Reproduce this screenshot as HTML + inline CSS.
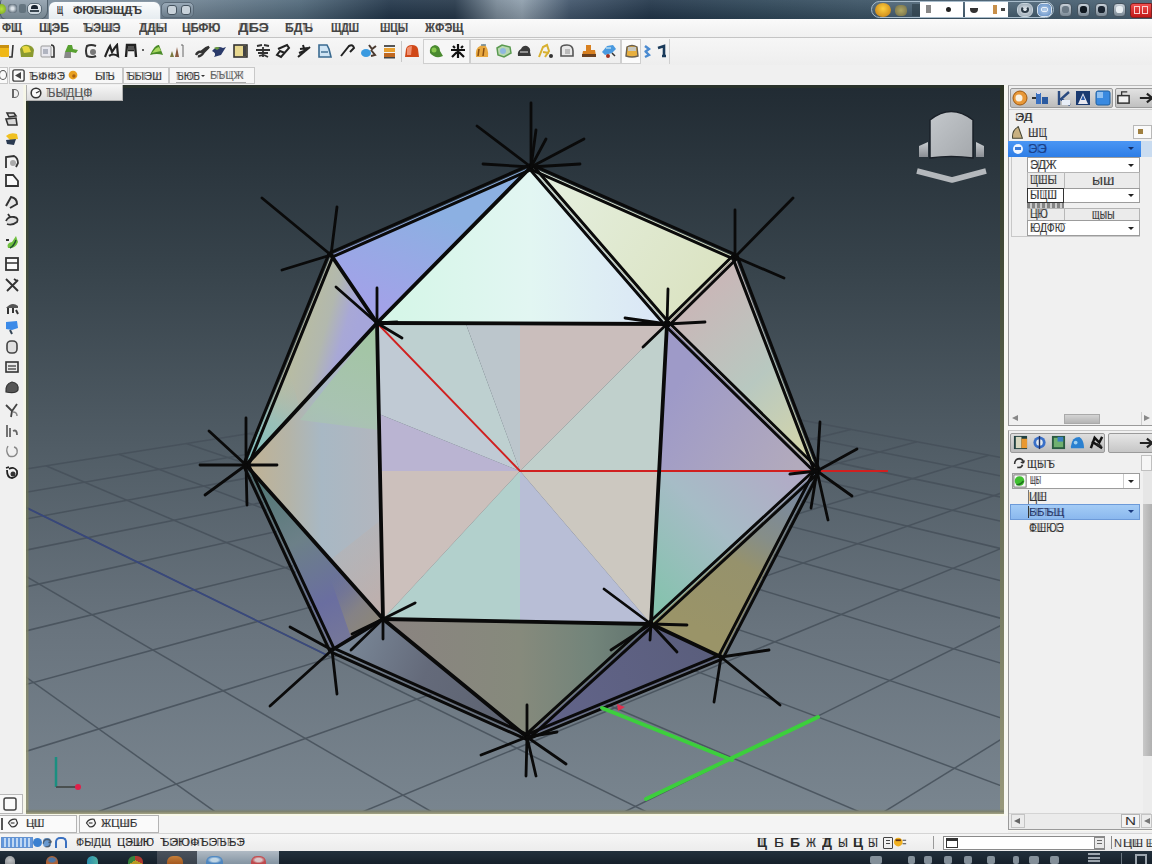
<!DOCTYPE html><html><head><meta charset="utf-8"><style>
html,body{margin:0;padding:0;width:1152px;height:864px;overflow:hidden;background:#f0f0f0;font-family:"Liberation Sans",sans-serif;}
.b{position:absolute;box-sizing:border-box;}
.t{position:absolute;white-space:nowrap;line-height:1;}
</style></head><body>
<svg class="b" style="left:0;top:0" width="1152" height="864" viewBox="0 0 1152 864"><defs>
<linearGradient id="bg" x1="0" y1="85" x2="0" y2="813" gradientUnits="userSpaceOnUse">
<stop offset="0" stop-color="#212b33"/><stop offset="0.25" stop-color="#37434b"/>
<stop offset="0.5" stop-color="#515d66"/><stop offset="0.75" stop-color="#69747e"/><stop offset="1" stop-color="#79858f"/>
</linearGradient>
<clipPath id="vc"><rect x="26" y="85" width="975" height="728"/></clipPath>
</defs><rect x="26" y="85" width="975" height="728" fill="url(#bg)"/><g clip-path="url(#vc)"><g opacity="0.85"><line x1="-1026.4" y1="636.4" x2="-4063.7" y2="6031.6" stroke="#46505a" stroke-width="1.5"/><line x1="-850.4" y1="608.4" x2="-2090.9" y2="6058.1" stroke="#46505a" stroke-width="1.5"/><line x1="-694.3" y1="583.6" x2="-118.2" y2="6084.7" stroke="#46505a" stroke-width="1.5"/><line x1="-554.8" y1="561.4" x2="1854.6" y2="6111.2" stroke="#46505a" stroke-width="1.5"/><line x1="-429.4" y1="541.4" x2="3827.3" y2="6137.8" stroke="#46505a" stroke-width="1.5"/><line x1="-316.0" y1="523.4" x2="5800.1" y2="6164.3" stroke="#46505a" stroke-width="1.5"/><line x1="-213.1" y1="507.0" x2="7772.8" y2="6190.9" stroke="#46505a" stroke-width="1.5"/><line x1="-119.2" y1="492.1" x2="9745.6" y2="6217.5" stroke="#46505a" stroke-width="1.5"/><line x1="-33.2" y1="478.4" x2="11718.3" y2="6244.0" stroke="#46505a" stroke-width="1.5"/><line x1="45.9" y1="465.8" x2="13691.1" y2="6270.6" stroke="#46505a" stroke-width="1.5"/><line x1="118.8" y1="454.2" x2="15663.8" y2="6297.1" stroke="#46505a" stroke-width="1.5"/><line x1="186.3" y1="443.5" x2="17636.6" y2="6323.7" stroke="#46505a" stroke-width="1.5"/><line x1="249.0" y1="433.5" x2="19609.3" y2="6350.3" stroke="#46505a" stroke-width="1.5"/><line x1="307.3" y1="424.3" x2="21582.1" y2="6376.8" stroke="#46505a" stroke-width="1.5"/><line x1="361.6" y1="415.6" x2="23554.8" y2="6403.4" stroke="#46505a" stroke-width="1.5"/><line x1="412.5" y1="407.5" x2="25527.6" y2="6429.9" stroke="#46505a" stroke-width="1.5"/><line x1="460.1" y1="400.0" x2="27500.3" y2="6456.5" stroke="#46505a" stroke-width="1.5"/><line x1="504.8" y1="392.8" x2="29473.1" y2="6483.0" stroke="#46505a" stroke-width="1.5"/><line x1="546.9" y1="386.1" x2="31445.8" y2="6509.6" stroke="#46505a" stroke-width="1.5"/><line x1="586.6" y1="379.8" x2="33418.6" y2="6536.2" stroke="#46505a" stroke-width="1.5"/><line x1="-32534.1" y1="5648.3" x2="586.6" y2="379.8" stroke="#46505a" stroke-width="1.5"/><line x1="-30256.1" y1="5679.0" x2="632.2" y2="388.4" stroke="#46505a" stroke-width="1.5"/><line x1="-27978.2" y1="5709.6" x2="681.0" y2="397.6" stroke="#46505a" stroke-width="1.5"/><line x1="-25700.2" y1="5740.3" x2="733.5" y2="407.4" stroke="#46505a" stroke-width="1.5"/><line x1="-23422.3" y1="5771.0" x2="789.9" y2="418.0" stroke="#46505a" stroke-width="1.5"/><line x1="-21144.4" y1="5801.6" x2="850.9" y2="429.4" stroke="#46505a" stroke-width="1.5"/><line x1="-18866.4" y1="5832.3" x2="916.9" y2="441.8" stroke="#46505a" stroke-width="1.5"/><line x1="-16588.5" y1="5862.9" x2="988.7" y2="455.2" stroke="#46505a" stroke-width="1.5"/><line x1="-14310.5" y1="5893.6" x2="1066.9" y2="469.9" stroke="#46505a" stroke-width="1.5"/><line x1="-12032.6" y1="5924.3" x2="1152.5" y2="486.0" stroke="#46505a" stroke-width="1.5"/><line x1="-9754.7" y1="5954.9" x2="1246.6" y2="503.6" stroke="#46505a" stroke-width="1.5"/><line x1="-7476.7" y1="5985.6" x2="1350.6" y2="523.1" stroke="#46505a" stroke-width="1.5"/><line x1="-5198.8" y1="6016.3" x2="1466.0" y2="544.7" stroke="#46505a" stroke-width="1.5"/><line x1="-2920.8" y1="6046.9" x2="1594.9" y2="568.9" stroke="#46505a" stroke-width="1.5"/><line x1="-642.9" y1="6077.6" x2="1739.9" y2="596.1" stroke="#46505a" stroke-width="1.5"/><line x1="1635.0" y1="6108.3" x2="1903.9" y2="626.9" stroke="#46505a" stroke-width="1.5"/><line x1="3913.0" y1="6138.9" x2="2091.3" y2="662.0" stroke="#46505a" stroke-width="1.5"/><line x1="6190.9" y1="6169.6" x2="2307.1" y2="702.5" stroke="#46505a" stroke-width="1.5"/><line x1="8468.9" y1="6200.3" x2="2558.6" y2="749.6" stroke="#46505a" stroke-width="1.5"/><line x1="10746.8" y1="6230.9" x2="2855.3" y2="805.2" stroke="#46505a" stroke-width="1.5"/><line x1="13024.7" y1="6261.6" x2="3210.6" y2="871.9" stroke="#46505a" stroke-width="1.5"/><line x1="15302.7" y1="6292.3" x2="3643.7" y2="953.1" stroke="#46505a" stroke-width="1.5"/><line x1="17580.6" y1="6322.9" x2="4183.6" y2="1054.3" stroke="#46505a" stroke-width="1.5"/><line x1="19858.5" y1="6353.6" x2="4874.9" y2="1183.9" stroke="#46505a" stroke-width="1.5"/><line x1="22136.5" y1="6384.3" x2="5792.0" y2="1355.9" stroke="#46505a" stroke-width="1.5"/><line x1="24414.4" y1="6414.9" x2="7067.1" y2="1595.0" stroke="#46505a" stroke-width="1.5"/><line x1="26692.4" y1="6445.6" x2="8960.6" y2="1950.1" stroke="#46505a" stroke-width="1.5"/><line x1="28970.3" y1="6476.3" x2="12066.3" y2="2532.4" stroke="#46505a" stroke-width="1.5"/><line x1="31248.2" y1="6506.9" x2="18096.1" y2="3663.1" stroke="#46505a" stroke-width="1.5"/><line x1="-33.2" y1="478.4" x2="327.7" y2="655.5" stroke="#32427e" stroke-width="1.7"/></g><defs><linearGradient id="f1" gradientUnits="userSpaceOnUse" x1="431" y1="211" x2="390" y2="310"><stop offset="0" stop-color="#8cb0e2"/><stop offset="1" stop-color="#a2a2e8"/></linearGradient><linearGradient id="f2" gradientUnits="userSpaceOnUse" x1="400" y1="300" x2="660" y2="300"><stop offset="0" stop-color="#d6f6e8"/><stop offset="0.5" stop-color="#e2f6f2"/><stop offset="1" stop-color="#dae6f6"/></linearGradient><linearGradient id="f3" gradientUnits="userSpaceOnUse" x1="560" y1="190" x2="720" y2="300"><stop offset="0" stop-color="#e4eedc"/><stop offset="1" stop-color="#dae2c0"/></linearGradient><linearGradient id="f4" gradientUnits="userSpaceOnUse" x1="298" y1="335" x2="350" y2="350"><stop offset="0" stop-color="#b8bca2"/><stop offset="0.45" stop-color="#b2b8ae"/><stop offset="0.8" stop-color="#a8a8d6"/><stop offset="1" stop-color="#a6a6da"/></linearGradient><linearGradient id="f4b" gradientUnits="userSpaceOnUse" x1="250" y1="460" x2="300" y2="380"><stop offset="0" stop-color="#7cc0c0" stop-opacity="1"/><stop offset="0.5" stop-color="#94c0bc" stop-opacity="0.8"/><stop offset="1" stop-color="#b0bcb0" stop-opacity="0"/></linearGradient><linearGradient id="f5" gradientUnits="userSpaceOnUse" x1="680" y1="320" x2="810" y2="460"><stop offset="0" stop-color="#c8b8b8"/><stop offset="0.5" stop-color="#b8c8c0"/><stop offset="1" stop-color="#d6d6a8"/></linearGradient><linearGradient id="f6" gradientUnits="userSpaceOnUse" x1="250" y1="470" x2="380" y2="470"><stop offset="0" stop-color="#c0b294"/><stop offset="0.3" stop-color="#b4b4a8"/><stop offset="0.55" stop-color="#a8b8c4"/><stop offset="1" stop-color="#b2b6be"/></linearGradient><linearGradient id="f6b" gradientUnits="userSpaceOnUse" x1="377" y1="330" x2="330" y2="470"><stop offset="0" stop-color="#a2c6a2" stop-opacity="1"/><stop offset="0.6" stop-color="#a8c4b0" stop-opacity="0.9"/><stop offset="1" stop-color="#a8c0b8" stop-opacity="0.3"/></linearGradient><linearGradient id="f6c" gradientUnits="userSpaceOnUse" x1="300" y1="500" x2="383" y2="619"><stop offset="0" stop-color="#b4b4b4" stop-opacity="0"/><stop offset="1" stop-color="#c0aeaa" stop-opacity="1"/></linearGradient><linearGradient id="f7" gradientUnits="userSpaceOnUse" x1="680" y1="380" x2="800" y2="460"><stop offset="0" stop-color="#9e9ac8"/><stop offset="1" stop-color="#b2aabc"/></linearGradient><linearGradient id="f7b" gradientUnits="userSpaceOnUse" x1="665" y1="610" x2="800" y2="475"><stop offset="0" stop-color="#86c2ae"/><stop offset="0.5" stop-color="#a6bcc6"/><stop offset="1" stop-color="#b2aac6"/></linearGradient><linearGradient id="f8" gradientUnits="userSpaceOnUse" x1="250" y1="470" x2="335" y2="640"><stop offset="0" stop-color="#4e7672"/><stop offset="0.45" stop-color="#6c8088"/><stop offset="0.8" stop-color="#6a6ea0"/><stop offset="1" stop-color="#74769a"/></linearGradient><linearGradient id="f8b" gradientUnits="userSpaceOnUse" x1="383" y1="619" x2="335" y2="575"><stop offset="0" stop-color="#8c8678" stop-opacity="1"/><stop offset="0.4" stop-color="#8a8680" stop-opacity="0.8"/><stop offset="1" stop-color="#7a8088" stop-opacity="0"/></linearGradient><linearGradient id="f9" gradientUnits="userSpaceOnUse" x1="800" y1="490" x2="720" y2="640"><stop offset="0" stop-color="#7888a0"/><stop offset="0.35" stop-color="#868e88"/><stop offset="0.55" stop-color="#96926c"/><stop offset="1" stop-color="#9a9468"/></linearGradient><linearGradient id="f10" gradientUnits="userSpaceOnUse" x1="400" y1="660" x2="640" y2="660"><stop offset="0" stop-color="#8a8480"/><stop offset="0.5" stop-color="#868a7c"/><stop offset="0.8" stop-color="#72847a"/><stop offset="1" stop-color="#647670"/></linearGradient><linearGradient id="f11" gradientUnits="userSpaceOnUse" x1="340" y1="650" x2="500" y2="720"><stop offset="0" stop-color="#7a8898"/><stop offset="0.5" stop-color="#646a7a"/><stop offset="1" stop-color="#5e6472"/></linearGradient><linearGradient id="f12" gradientUnits="userSpaceOnUse" x1="720" y1="660" x2="540" y2="730"><stop offset="0" stop-color="#5a5e7c"/><stop offset="1" stop-color="#62648a"/></linearGradient></defs><polygon points="531,167 331,255 377,323" fill="url(#f1)" /><polygon points="531,167 377,323 667,324" fill="url(#f2)" /><polygon points="531,167 735,257 667,324" fill="url(#f3)" /><polygon points="331,255 246,465 377,323" fill="url(#f4)" /><polygon points="246,465 286,356 300,410" fill="url(#f4b)"/><polygon points="735,257 667,324 817,471" fill="url(#f5)" /><polygon points="377,323 246,465 383,619" fill="url(#f6)" /><polygon points="377,323 300,420 378,430" fill="url(#f6b)"/><polygon points="330,560 383,619 381,520" fill="url(#f6c)"/><polygon points="667,324 817,471 651,624" fill="url(#f7)" /><polygon points="659,471 817,471 651,624" fill="url(#f7b)"/><polygon points="246,465 332,650 383,619" fill="url(#f8)" /><polygon points="383,619 318,543 352,640" fill="url(#f8b)"/><polygon points="817,471 721,657 651,624" fill="url(#f9)" /><polygon points="383,619 651,624 527,737" fill="url(#f10)" /><polygon points="332,650 383,619 527,737" fill="url(#f11)" /><polygon points="721,657 651,624 527,737" fill="url(#f12)" /><polygon points="520,471 377,323 466,324" fill="#bed0d0"/><polygon points="520,471 466,324 520,324" fill="#bcc6cc"/><polygon points="520,471 520,324 667,324" fill="#cabebc"/><polygon points="520,471 667,324 659,471" fill="#c0d0cc"/><polygon points="520,471 659,471 651,624" fill="#ccc8c0"/><polygon points="520,471 651,624 520,621" fill="#b8bed6"/><polygon points="520,471 520,621 383,619" fill="#b2d0cc"/><polygon points="520,471 383,619 380,471" fill="#ccc0bc"/><polygon points="520,471 380,471 379,414" fill="#bab4d2"/><polygon points="520,471 379,414 377,323" fill="#c0cad4"/><polyline points="377,323 520,471 888,471" fill="none" stroke="#d02020" stroke-width="1.8"/><line x1="530.0334273257615" y1="164.80324392218537" x2="330.0334273257616" y2="252.80324392218537" stroke="#0a0a0a" stroke-width="3.0" stroke-linecap="round"/><line x1="531.9665726742385" y1="169.19675607781463" x2="331.9665726742384" y2="257.19675607781465" stroke="#0a0a0a" stroke-width="3.0" stroke-linecap="round"/><line x1="530.0312635042169" y1="169.19580272377505" x2="734.0312635042169" y2="259.19580272377505" stroke="#0a0a0a" stroke-width="3.0" stroke-linecap="round"/><line x1="531.9687364957831" y1="164.80419727622495" x2="735.9687364957831" y2="254.80419727622495" stroke="#0a0a0a" stroke-width="3.0" stroke-linecap="round"/><line x1="531" y1="167" x2="377" y2="323" stroke="#0a0a0a" stroke-width="3.8" stroke-linecap="round"/><line x1="529.1859650193247" y1="168.57139335905632" x2="665.1859650193247" y2="325.57139335905634" stroke="#0a0a0a" stroke-width="3.0" stroke-linecap="round"/><line x1="532.8140349806753" y1="165.42860664094368" x2="668.8140349806753" y2="322.42860664094366" stroke="#0a0a0a" stroke-width="3.0" stroke-linecap="round"/><line x1="331" y1="255" x2="377" y2="323" stroke="#0a0a0a" stroke-width="3.8" stroke-linecap="round"/><line x1="733.3155607240653" y1="255.29041983934985" x2="665.3155607240653" y2="322.29041983934985" stroke="#0a0a0a" stroke-width="3.0" stroke-linecap="round"/><line x1="736.6844392759347" y1="258.70958016065015" x2="668.6844392759347" y2="325.70958016065015" stroke="#0a0a0a" stroke-width="3.0" stroke-linecap="round"/><line x1="377" y1="323" x2="667" y2="324" stroke="#0a0a0a" stroke-width="3.8" stroke-linecap="round"/><line x1="328.7753276482644" y1="254.09953738144037" x2="243.7753276482644" y2="464.09953738144037" stroke="#0a0a0a" stroke-width="3.0" stroke-linecap="round"/><line x1="333.2246723517356" y1="255.90046261855963" x2="248.2246723517356" y2="465.90046261855963" stroke="#0a0a0a" stroke-width="3.0" stroke-linecap="round"/><line x1="732.7588926684356" y1="257.8587420616275" x2="814.7588926684356" y2="471.8587420616275" stroke="#0a0a0a" stroke-width="3.0" stroke-linecap="round"/><line x1="737.2411073315644" y1="256.1412579383725" x2="819.2411073315644" y2="470.1412579383725" stroke="#0a0a0a" stroke-width="3.0" stroke-linecap="round"/><line x1="377" y1="323" x2="246" y2="465" stroke="#0a0a0a" stroke-width="3.8" stroke-linecap="round"/><line x1="665.3201714023368" y1="325.714110813942" x2="815.3201714023368" y2="472.714110813942" stroke="#0a0a0a" stroke-width="3.0" stroke-linecap="round"/><line x1="668.6798285976632" y1="322.285889186058" x2="818.6798285976632" y2="469.285889186058" stroke="#0a0a0a" stroke-width="3.0" stroke-linecap="round"/><line x1="377" y1="323" x2="383" y2="619" stroke="#0a0a0a" stroke-width="3.8" stroke-linecap="round"/><line x1="667" y1="324" x2="651" y2="624" stroke="#0a0a0a" stroke-width="3.8" stroke-linecap="round"/><line x1="243.82366014720822" y1="466.0117039315681" x2="329.8236601472082" y2="651.011703931568" stroke="#0a0a0a" stroke-width="3.0" stroke-linecap="round"/><line x1="248.17633985279178" y1="463.9882960684319" x2="334.1763398527918" y2="648.988296068432" stroke="#0a0a0a" stroke-width="3.0" stroke-linecap="round"/><line x1="814.8673104230684" y1="469.8992569925514" x2="718.8673104230684" y2="655.8992569925514" stroke="#0a0a0a" stroke-width="3.0" stroke-linecap="round"/><line x1="819.1326895769316" y1="472.1007430074486" x2="723.1326895769316" y2="658.1007430074486" stroke="#0a0a0a" stroke-width="3.0" stroke-linecap="round"/><line x1="246" y1="465" x2="383" y2="619" stroke="#0a0a0a" stroke-width="3.8" stroke-linecap="round"/><line x1="815.3734528454326" y1="469.23524949243006" x2="649.3734528454326" y2="622.2352494924301" stroke="#0a0a0a" stroke-width="3.0" stroke-linecap="round"/><line x1="818.6265471545674" y1="472.76475050756994" x2="652.6265471545674" y2="625.7647505075699" stroke="#0a0a0a" stroke-width="3.0" stroke-linecap="round"/><line x1="383" y1="619" x2="651" y2="624" stroke="#0a0a0a" stroke-width="3.8" stroke-linecap="round"/><line x1="383" y1="619" x2="332" y2="650" stroke="#0a0a0a" stroke-width="3.8" stroke-linecap="round"/><line x1="651" y1="624" x2="721" y2="657" stroke="#0a0a0a" stroke-width="3.8" stroke-linecap="round"/><line x1="331.0221400777027" y1="652.1917549982525" x2="526.0221400777027" y2="739.1917549982525" stroke="#0a0a0a" stroke-width="3.0" stroke-linecap="round"/><line x1="332.9778599222973" y1="647.8082450017475" x2="527.9778599222973" y2="734.8082450017475" stroke="#0a0a0a" stroke-width="3.0" stroke-linecap="round"/><line x1="720.0850501354665" y1="654.7812465785063" x2="526.0850501354665" y2="734.7812465785063" stroke="#0a0a0a" stroke-width="3.0" stroke-linecap="round"/><line x1="721.9149498645335" y1="659.2187534214937" x2="527.9149498645335" y2="739.2187534214937" stroke="#0a0a0a" stroke-width="3.0" stroke-linecap="round"/><line x1="383" y1="619" x2="527" y2="737" stroke="#0a0a0a" stroke-width="3.8" stroke-linecap="round"/><line x1="649.3834503097497" y1="622.2260870655662" x2="525.3834503097497" y2="735.2260870655662" stroke="#0a0a0a" stroke-width="3.0" stroke-linecap="round"/><line x1="652.6165496902503" y1="625.7739129344338" x2="528.6165496902503" y2="738.7739129344338" stroke="#0a0a0a" stroke-width="3.0" stroke-linecap="round"/><line x1="531" y1="167" x2="531" y2="103" stroke="#0a0a0a" stroke-width="2.8" stroke-linecap="round"/><line x1="531" y1="167" x2="477" y2="126" stroke="#0a0a0a" stroke-width="2.8" stroke-linecap="round"/><line x1="531" y1="167" x2="483" y2="164" stroke="#0a0a0a" stroke-width="2.8" stroke-linecap="round"/><line x1="531" y1="167" x2="580" y2="164" stroke="#0a0a0a" stroke-width="2.8" stroke-linecap="round"/><line x1="531" y1="167" x2="584" y2="139" stroke="#0a0a0a" stroke-width="2.8" stroke-linecap="round"/><line x1="531" y1="167" x2="536" y2="130" stroke="#0a0a0a" stroke-width="2.8" stroke-linecap="round"/><line x1="531" y1="167" x2="546" y2="139" stroke="#0a0a0a" stroke-width="2.8" stroke-linecap="round"/><line x1="331" y1="255" x2="262" y2="198" stroke="#0a0a0a" stroke-width="2.8" stroke-linecap="round"/><line x1="331" y1="255" x2="337" y2="207" stroke="#0a0a0a" stroke-width="2.8" stroke-linecap="round"/><line x1="331" y1="255" x2="282" y2="270" stroke="#0a0a0a" stroke-width="2.8" stroke-linecap="round"/><line x1="377" y1="323" x2="377" y2="288" stroke="#0a0a0a" stroke-width="2.8" stroke-linecap="round"/><line x1="377" y1="323" x2="336" y2="287" stroke="#0a0a0a" stroke-width="2.8" stroke-linecap="round"/><line x1="377" y1="323" x2="397" y2="322" stroke="#0a0a0a" stroke-width="2.8" stroke-linecap="round"/><line x1="377" y1="323" x2="402" y2="338" stroke="#0a0a0a" stroke-width="2.8" stroke-linecap="round"/><line x1="735" y1="257" x2="735" y2="210" stroke="#0a0a0a" stroke-width="2.8" stroke-linecap="round"/><line x1="735" y1="257" x2="793" y2="198" stroke="#0a0a0a" stroke-width="2.8" stroke-linecap="round"/><line x1="735" y1="257" x2="784" y2="278" stroke="#0a0a0a" stroke-width="2.8" stroke-linecap="round"/><line x1="667" y1="324" x2="668" y2="289" stroke="#0a0a0a" stroke-width="2.8" stroke-linecap="round"/><line x1="667" y1="324" x2="625" y2="318" stroke="#0a0a0a" stroke-width="2.8" stroke-linecap="round"/><line x1="667" y1="324" x2="705" y2="322" stroke="#0a0a0a" stroke-width="2.8" stroke-linecap="round"/><line x1="667" y1="324" x2="643" y2="347" stroke="#0a0a0a" stroke-width="2.8" stroke-linecap="round"/><line x1="246" y1="465" x2="246" y2="418" stroke="#0a0a0a" stroke-width="2.8" stroke-linecap="round"/><line x1="246" y1="465" x2="209" y2="431" stroke="#0a0a0a" stroke-width="2.8" stroke-linecap="round"/><line x1="246" y1="465" x2="200" y2="465" stroke="#0a0a0a" stroke-width="2.8" stroke-linecap="round"/><line x1="246" y1="465" x2="277" y2="465" stroke="#0a0a0a" stroke-width="2.8" stroke-linecap="round"/><line x1="246" y1="465" x2="205" y2="495" stroke="#0a0a0a" stroke-width="2.8" stroke-linecap="round"/><line x1="246" y1="465" x2="247" y2="505" stroke="#0a0a0a" stroke-width="2.8" stroke-linecap="round"/><line x1="817" y1="471" x2="820" y2="422" stroke="#0a0a0a" stroke-width="2.8" stroke-linecap="round"/><line x1="817" y1="471" x2="857" y2="449" stroke="#0a0a0a" stroke-width="2.8" stroke-linecap="round"/><line x1="817" y1="471" x2="852" y2="496" stroke="#0a0a0a" stroke-width="2.8" stroke-linecap="round"/><line x1="817" y1="471" x2="828" y2="520" stroke="#0a0a0a" stroke-width="2.8" stroke-linecap="round"/><line x1="817" y1="471" x2="811" y2="508" stroke="#0a0a0a" stroke-width="2.8" stroke-linecap="round"/><line x1="817" y1="471" x2="790" y2="474" stroke="#0a0a0a" stroke-width="2.8" stroke-linecap="round"/><line x1="332" y1="650" x2="290" y2="627" stroke="#0a0a0a" stroke-width="2.8" stroke-linecap="round"/><line x1="332" y1="650" x2="270" y2="706" stroke="#0a0a0a" stroke-width="2.8" stroke-linecap="round"/><line x1="332" y1="650" x2="337" y2="694" stroke="#0a0a0a" stroke-width="2.8" stroke-linecap="round"/><line x1="383" y1="619" x2="415" y2="603" stroke="#0a0a0a" stroke-width="2.8" stroke-linecap="round"/><line x1="383" y1="619" x2="383" y2="639" stroke="#0a0a0a" stroke-width="2.8" stroke-linecap="round"/><line x1="383" y1="619" x2="351" y2="650" stroke="#0a0a0a" stroke-width="2.8" stroke-linecap="round"/><line x1="383" y1="619" x2="352" y2="634" stroke="#0a0a0a" stroke-width="2.8" stroke-linecap="round"/><line x1="651" y1="624" x2="604" y2="589" stroke="#0a0a0a" stroke-width="2.8" stroke-linecap="round"/><line x1="651" y1="624" x2="687" y2="625" stroke="#0a0a0a" stroke-width="2.8" stroke-linecap="round"/><line x1="651" y1="624" x2="650" y2="640" stroke="#0a0a0a" stroke-width="2.8" stroke-linecap="round"/><line x1="651" y1="624" x2="611" y2="650" stroke="#0a0a0a" stroke-width="2.8" stroke-linecap="round"/><line x1="651" y1="624" x2="677" y2="652" stroke="#0a0a0a" stroke-width="2.8" stroke-linecap="round"/><line x1="721" y1="657" x2="769" y2="650" stroke="#0a0a0a" stroke-width="2.8" stroke-linecap="round"/><line x1="721" y1="657" x2="780" y2="705" stroke="#0a0a0a" stroke-width="2.8" stroke-linecap="round"/><line x1="721" y1="657" x2="714" y2="702" stroke="#0a0a0a" stroke-width="2.8" stroke-linecap="round"/><line x1="527" y1="737" x2="527" y2="705" stroke="#0a0a0a" stroke-width="2.8" stroke-linecap="round"/><line x1="527" y1="737" x2="481" y2="755" stroke="#0a0a0a" stroke-width="2.8" stroke-linecap="round"/><line x1="527" y1="737" x2="526" y2="776" stroke="#0a0a0a" stroke-width="2.8" stroke-linecap="round"/><line x1="527" y1="737" x2="536" y2="776" stroke="#0a0a0a" stroke-width="2.8" stroke-linecap="round"/><line x1="527" y1="737" x2="566" y2="764" stroke="#0a0a0a" stroke-width="2.8" stroke-linecap="round"/><line x1="527" y1="737" x2="557" y2="732" stroke="#0a0a0a" stroke-width="2.8" stroke-linecap="round"/><line x1="602" y1="708" x2="732" y2="760" stroke="#3ccf3c" stroke-width="4" stroke-linecap="round"/><line x1="646" y1="799" x2="818" y2="717" stroke="#3ccf3c" stroke-width="4" stroke-linecap="round"/><path d="M617 704 l8 3 -7 4z" fill="#e03050"/><line x1="56" y1="757" x2="56" y2="787" stroke="#1a8f80" stroke-width="2.5"/><line x1="56" y1="787" x2="78" y2="787" stroke="#4a5050" stroke-width="2"/><circle cx="78" cy="787" r="3" fill="#e0204a"/><defs><linearGradient id="vcb" x1="0" y1="0" x2="1" y2="1"><stop offset="0" stop-color="#c4c8cc"/><stop offset="1" stop-color="#a4a8ac"/></linearGradient><linearGradient id="vcs" x1="0" y1="0" x2="0" y2="1"><stop offset="0" stop-color="#c8ccd0"/><stop offset="1" stop-color="#8a8e94"/></linearGradient></defs><path d="M930 120 Q951 103 973 120 L973 158 Q951 155 930 158Z" fill="url(#vcb)" stroke="#1a2028" stroke-width="1.5"/><path d="M919 146 L928 142 L928 157 L919 157Z" fill="url(#vcs)"/><path d="M976 142 L984 146 L984 157 L976 157Z" fill="url(#vcs)"/><path d="M917 171 L952 180 L986 171" fill="none" stroke="#b4b8bc" stroke-width="5.5" stroke-linejoin="round"/></g><defs><linearGradient id="rb" gradientUnits="userSpaceOnUse" x1="0" x2="0" y1="85" y2="813"><stop offset="0" stop-color="#2a3222"/><stop offset="0.5" stop-color="#606850"/><stop offset="1" stop-color="#98987a"/></linearGradient></defs><rect x="1000" y="85" width="4" height="729" fill="url(#rb)"/><rect x="26" y="85" width="2.5" height="729" fill="url(#rb)" opacity="0.85"/><rect x="26" y="85" width="975" height="3" fill="#2e3628" opacity="0.7"/><linearGradient id="bb" x1="0" x2="0" y1="0" y2="1"><stop offset="0" stop-color="#78806e" stop-opacity="0"/><stop offset="0.5" stop-color="#7e8270"/><stop offset="1" stop-color="#a4a484"/></linearGradient><rect x="26" y="809" width="978" height="5" fill="url(#bb)"/><rect x="1004" y="85" width="3" height="729" fill="#fafaf2"/><rect x="26" y="814" width="978" height="2" fill="#f8f8ea"/></svg>
<div class="b" style="left:0px;top:0px;width:1152px;height:19px;background:linear-gradient(90deg,#8494a2 0px,#6e8292 190px,#50687a 300px,#22364a 390px,#26384a 455px,#7a8a98 497px,#8e9eac 522px,#40546a 570px,#22364a 650px,#2e4658 760px,#3a5264 860px,#4a6274 1152px);"></div>
<div class="b" style="left:0px;top:0px;width:1152px;height:19px;background:linear-gradient(rgba(255,255,255,.08),rgba(0,0,0,.12));"></div>
<div class="b" style="left:0px;top:0px;width:48px;height:19.5px;background:linear-gradient(#9aa8b4,#74848f);border-radius:2px 0 9px 6px;border:1px solid #4e5e6a;border-top:none"></div>
<div class="b" style="left:-3px;top:4px;width:9px;height:10px;background:radial-gradient(#b8e040,#70a020);border-radius:50%;"></div>
<div class="b" style="left:8px;top:4px;width:9px;height:9px;background:radial-gradient(#dde4ea 20%,#6a7884 70%);border-radius:3px;"></div>
<div class="b" style="left:19px;top:4px;width:7px;height:9px;background:#5a6a76;border-radius:2px;opacity:.8"></div>
<div class="b" style="left:27px;top:3px;width:15px;height:12px;background:linear-gradient(#f0f4f8,#c8d2da);border-radius:5px;border:1px solid #5a6a76"></div>
<div class="b" style="left:31px;top:5px;width:7px;height:4px;background:#1a2430;border-radius:3px 3px 0 0"></div>
<div class="b" style="left:30px;top:10px;width:9px;height:2px;background:#3a4650"></div>
<div class="b" style="left:48px;top:1px;width:113px;height:18px;background:linear-gradient(#fafcfd,#e6ecf0);border-radius:7px 7px 0 0;border:1px solid #8898a6;border-bottom:none"></div>
<div class="t" style="left:57px;top:4.15px;font-size:11.63px;color:#3a3a3a;font-weight:bold;transform:scaleX(0.506);transform-origin:0 0;opacity:1">Щ</div><div class="t" style="left:57px;top:4.15px;font-size:11.63px;color:#3a3a3a;font-weight:normal;transform:scaleX(0.715);transform-origin:0 0;opacity:0.45">Н</div>
<div class="t" style="left:73px;top:4.15px;font-size:11.63px;color:#3a3a3a;font-weight:bold;transform:scaleX(0.961);transform-origin:0 0;opacity:1">ФЮЫЭЩДЪ</div><div class="t" style="left:73px;top:4.15px;font-size:11.63px;color:#3a3a3a;font-weight:normal;transform:scaleX(1.262);transform-origin:0 0;opacity:0.45">ТППННЕГ</div>
<div class="b" style="left:161px;top:2px;width:33px;height:16px;background:linear-gradient(#9aaab8,#6a7c8a);border-radius:5px;border:1px solid #5a6a78"></div>
<div class="b" style="left:167px;top:5px;width:10px;height:10px;background:#c8d2da;border-radius:3px;border:1px solid #44525e"></div>
<div class="b" style="left:181px;top:5px;width:10px;height:10px;background:#c8d2da;border-radius:3px;border:1px solid #44525e"></div>
<div class="b" style="left:871px;top:1px;width:183px;height:17px;background:linear-gradient(#5a7080,#3e5464);border:1px solid #a8bccb;border-radius:9px;"></div>
<div class="b" style="left:875px;top:3px;width:16px;height:14px;background:radial-gradient(circle at 50% 40%,#ffd040,#c07810);border-radius:50%;"></div>
<div class="b" style="left:895px;top:5px;width:12px;height:11px;background:radial-gradient(#c8b860,#7a7040);border-radius:40%;opacity:.8"></div>
<div class="b" style="left:912px;top:4px;width:8px;height:12px;background:#2a3a44;opacity:.6"></div>
<div class="b" style="left:920px;top:2px;width:43px;height:15px;background:#fff;"></div>
<div class="b" style="left:926px;top:5px;width:5px;height:8px;background:#888"></div>
<div class="b" style="left:946px;top:7px;width:5px;height:5px;background:#222;border-radius:50%"></div>
<div class="b" style="left:965px;top:2px;width:43px;height:15px;background:#fff;"></div>
<div class="b" style="left:970px;top:8px;width:8px;height:5px;background:#333;border-radius:0 0 5px 5px"></div>
<div class="b" style="left:993px;top:5px;width:4px;height:9px;background:#c8904a"></div>
<div class="b" style="left:1001px;top:8px;width:4px;height:3px;background:#444"></div>
<div class="b" style="left:1017px;top:3px;width:16px;height:14px;background:radial-gradient(#e8eef2,#8a9aa8);border-radius:6px;border:1px solid #c8d4dc"></div>
<div class="b" style="left:1021px;top:6px;width:8px;height:7px;border:2px solid #2a3844;border-radius:50%;border-top-color:transparent"></div>
<div class="b" style="left:1037px;top:3px;width:15px;height:14px;background:radial-gradient(#b8d0ec,#5a88c0);border-radius:5px;border:1px solid #d8e4f0"></div>
<div class="b" style="left:1041px;top:7px;width:7px;height:5px;border:1.5px solid #e8f0f8;border-radius:2px"></div>
<div class="b" style="left:1059px;top:3px;width:13px;height:14px;background:linear-gradient(#c8d0d8,#7a8894);border-radius:4px;border:1px solid #44525e"></div>
<div class="b" style="left:1062px;top:6px;width:7px;height:7px;background:#6a7884;border-radius:40%"></div>
<div class="b" style="left:1077px;top:3px;width:13px;height:14px;background:linear-gradient(#c8d0d8,#7a8894);border-radius:4px;border:1px solid #44525e"></div>
<div class="b" style="left:1080px;top:6px;width:7px;height:7px;background:#101820;border-radius:40%"></div>
<div class="b" style="left:1095px;top:3px;width:13px;height:14px;background:linear-gradient(#c8d0d8,#7a8894);border-radius:4px;border:1px solid #44525e"></div>
<div class="b" style="left:1098px;top:6px;width:7px;height:7px;background:#1a2430;border-radius:40%"></div>
<div class="b" style="left:1113px;top:3px;width:13px;height:14px;background:linear-gradient(#c8d0d8,#7a8894);border-radius:4px;border:1px solid #44525e"></div>
<div class="b" style="left:1116px;top:6px;width:7px;height:7px;background:#e8eef2;border-radius:40%"></div>
<div class="b" style="left:1130px;top:3px;width:22px;height:15px;background:linear-gradient(#f05050,#c01818);border-radius:3px 0 0 3px;border:1px solid #802020"></div>
<div class="b" style="left:1134px;top:6px;width:6px;height:8px;border:1.5px solid #f8d0d0"></div>
<div class="b" style="left:1142px;top:6px;width:6px;height:8px;border:1.5px solid #f8d0d0"></div>
<div class="b" style="left:0px;top:19px;width:1152px;height:19px;background:linear-gradient(#fafafa,#f0f0f0);border-bottom:1px solid #c4c4c4;"></div>
<div class="t" style="left:2px;top:22.32px;font-size:12.50px;color:#444444;font-weight:bold;transform:scaleX(0.854);transform-origin:0 0;opacity:1">ФЩ</div><div class="t" style="left:2px;top:22.32px;font-size:12.50px;color:#444444;font-weight:normal;transform:scaleX(1.388);transform-origin:0 0;opacity:0.45">ТГ</div>
<div class="t" style="left:38.5px;top:22.32px;font-size:12.50px;color:#444444;font-weight:bold;transform:scaleX(0.986);transform-origin:0 0;opacity:1">ЩЭБ</div><div class="t" style="left:38.5px;top:22.32px;font-size:12.50px;color:#444444;font-weight:normal;transform:scaleX(1.148);transform-origin:0 0;opacity:0.45">ПИЕ</div>
<div class="t" style="left:83.3px;top:22.32px;font-size:12.50px;color:#444444;font-weight:bold;transform:scaleX(0.910);transform-origin:0 0;opacity:1">ЪЭШЭ</div><div class="t" style="left:83.3px;top:22.32px;font-size:12.50px;color:#444444;font-weight:normal;transform:scaleX(1.132);transform-origin:0 0;opacity:0.45">ГИНЕ</div>
<div class="t" style="left:138.5px;top:22.32px;font-size:12.50px;color:#444444;font-weight:bold;transform:scaleX(0.939);transform-origin:0 0;opacity:1">ДДЫ</div><div class="t" style="left:138.5px;top:22.32px;font-size:12.50px;color:#444444;font-weight:normal;transform:scaleX(1.128);transform-origin:0 0;opacity:0.45">ТНЕ</div>
<div class="t" style="left:182.3px;top:22.32px;font-size:12.50px;color:#444444;font-weight:bold;transform:scaleX(0.924);transform-origin:0 0;opacity:1">ЦБФЮ</div><div class="t" style="left:182.3px;top:22.32px;font-size:12.50px;color:#444444;font-weight:normal;transform:scaleX(1.069);transform-origin:0 0;opacity:0.45">ННПП</div>
<div class="t" style="left:238.3px;top:22.32px;font-size:12.50px;color:#444444;font-weight:bold;transform:scaleX(1.169);transform-origin:0 0;opacity:1">ДБЭ</div><div class="t" style="left:238.3px;top:22.32px;font-size:12.50px;color:#444444;font-weight:normal;transform:scaleX(1.299);transform-origin:0 0;opacity:0.45">ПГЕ</div>
<div class="t" style="left:285.2px;top:22.32px;font-size:12.50px;color:#444444;font-weight:bold;transform:scaleX(0.977);transform-origin:0 0;opacity:1">БДЪ</div><div class="t" style="left:285.2px;top:22.32px;font-size:12.50px;color:#444444;font-weight:normal;transform:scaleX(1.199);transform-origin:0 0;opacity:0.45">ТГН</div>
<div class="t" style="left:331px;top:22.32px;font-size:12.50px;color:#444444;font-weight:bold;transform:scaleX(0.819);transform-origin:0 0;opacity:1">ЩДШ</div><div class="t" style="left:331px;top:22.32px;font-size:12.50px;color:#444444;font-weight:normal;transform:scaleX(1.132);transform-origin:0 0;opacity:0.45">ПИГ</div>
<div class="t" style="left:380px;top:22.32px;font-size:12.50px;color:#444444;font-weight:bold;transform:scaleX(0.825);transform-origin:0 0;opacity:1">ШЦЫ</div><div class="t" style="left:380px;top:22.32px;font-size:12.50px;color:#444444;font-weight:normal;transform:scaleX(1.162);transform-origin:0 0;opacity:0.45">ЕПГ</div>
<div class="t" style="left:424.8px;top:22.32px;font-size:12.50px;color:#444444;font-weight:bold;transform:scaleX(0.883);transform-origin:0 0;opacity:1">ЖФЭЩ</div><div class="t" style="left:424.8px;top:22.32px;font-size:12.50px;color:#444444;font-weight:normal;transform:scaleX(1.212);transform-origin:0 0;opacity:0.45">ЕГТН</div>
<div class="b" style="left:0px;top:38px;width:1152px;height:27px;background:linear-gradient(#f6f6f6,#eeeeee);"></div>
<div class="b" style="left:423px;top:39px;width:47px;height:25px;border:1px solid #cfcfcf;background:#f6f6f6"></div>
<div class="b" style="left:470px;top:39px;width:151px;height:25px;border:1px solid #cfcfcf;"></div>
<div class="b" style="left:621px;top:39px;width:20px;height:25px;border:1px solid #cfcfcf;background:#fbfbfb"></div>
<div class="b" style="left:641px;top:39px;width:29px;height:25px;border-right:1px solid #cfcfcf;"></div>
<div class="b" style="left:401px;top:41px;width:1px;height:21px;background:#c8c8c8"></div>
<svg class="b" style="left:0px;top:42.5px;" width="16" height="16" viewBox="0 0 16 16"><rect x="0" y="2" width="9" height="12" rx="1" fill="#f0b818"/><rect x="0" y="2" width="9" height="3" fill="#c89010"/><path d="M13 2 L12 14 L9 14" stroke="#333" stroke-width="1.6" fill="none"/></svg>
<svg class="b" style="left:19px;top:42.5px;" width="16" height="16" viewBox="0 0 16 16"><path d="M1 6 Q4 1 9 2 Q14 3 15 7 L14 14 L2 14Z" fill="#8a9a30"/><path d="M3 4 Q7 2 10 4 L12 9 L5 10Z" fill="#e8d840"/></svg>
<svg class="b" style="left:40px;top:42.5px;" width="16" height="16" viewBox="0 0 16 16"><rect x="1" y="3" width="10" height="11" rx="1" fill="#e8e8ee" stroke="#999" stroke-width="1"/><path d="M11 2 Q14 2 14 5 L14 14 L11 14" stroke="#333" stroke-width="1.6" fill="none"/><rect x="3" y="6" width="5" height="5" fill="#b0b4c0"/></svg>
<svg class="b" style="left:63px;top:42.5px;" width="16" height="16" viewBox="0 0 16 16"><path d="M5 2 L9 2 L10 6 L15 7 L13 10 L8 9 L8 14 L2 14 L2 9Z" fill="#58a030"/><path d="M2 9 L8 9 L8 15 L1 15Z" fill="#888"/></svg>
<svg class="b" style="left:84px;top:42.5px;" width="16" height="16" viewBox="0 0 16 16"><path d="M12 3 Q7 1 3 3 Q1 8 3 13 Q8 15 12 13" stroke="#333" stroke-width="2" fill="none"/><circle cx="9" cy="9" r="3" fill="#777"/></svg>
<svg class="b" style="left:104px;top:42.5px;" width="16" height="16" viewBox="0 0 16 16"><path d="M1 14 Q4 6 6 3 L8 9 Q11 4 13 2 L14 13 Q9 10 5 13" stroke="#222" stroke-width="2.2" fill="none"/></svg>
<svg class="b" style="left:124px;top:42.5px;" width="16" height="16" viewBox="0 0 16 16"><path d="M2 14 L3 2 L11 2 L12 14 M4 7 L10 7" stroke="#222" stroke-width="2.4" fill="none"/><rect x="4" y="3" width="6" height="4" fill="#555"/></svg>
<svg class="b" style="left:149px;top:42.5px;" width="16" height="16" viewBox="0 0 16 16"><path d="M1 12 Q6 1 10 2 L14 12 Q8 10 1 12Z" fill="#4a8a28"/><path d="M3 10 Q7 4 10 4 L12 8Z" fill="#a8d860"/></svg>
<svg class="b" style="left:169px;top:42.5px;" width="16" height="16" viewBox="0 0 16 16"><path d="M1 14 L3 8 L5 14Z" fill="#7a7a40"/><path d="M6 14 L8 4 L10 14Z" fill="#8a5a40"/><path d="M12 2 L14 2 L14 14" stroke="#666" stroke-width="1" fill="none"/></svg>
<svg class="b" style="left:195px;top:42.5px;" width="16" height="16" viewBox="0 0 16 16"><path d="M1 12 Q3 8 6 9 L11 5 L14 4 L9 9 Q6 14 3 13" stroke="#333" stroke-width="2.4" fill="none"/></svg>
<svg class="b" style="left:211px;top:42.5px;" width="16" height="16" viewBox="0 0 16 16"><path d="M1 8 Q6 2 12 5 L15 4 L10 12 L3 14 Q6 10 1 8Z" fill="#2a3a6a"/><path d="M3 5 Q6 3 9 5 L6 7Z" fill="#6a9a40"/></svg>
<svg class="b" style="left:233px;top:42.5px;" width="16" height="16" viewBox="0 0 16 16"><rect x="1" y="2" width="13" height="12" fill="#e8d890" stroke="#333" stroke-width="1.6"/><rect x="10" y="3" width="3" height="10" fill="#444"/></svg>
<svg class="b" style="left:255px;top:42.5px;" width="16" height="16" viewBox="0 0 16 16"><path d="M2 3 L7 2 M9 2 L14 3 M1 7 L15 7 M3 10 L13 10 M4 13 L8 12 M9 12 L13 14 M8 4 L8 14" stroke="#333" stroke-width="1.8" fill="none"/></svg>
<svg class="b" style="left:275px;top:42.5px;" width="16" height="16" viewBox="0 0 16 16"><path d="M3 6 L12 2 L14 5 L6 14 L2 12 L5 8 L10 10" stroke="#222" stroke-width="2" fill="none"/></svg>
<svg class="b" style="left:296px;top:42.5px;" width="16" height="16" viewBox="0 0 16 16"><path d="M2 14 L14 4 M4 6 L12 5 M7 2 L9 9 M3 10 L8 8" stroke="#222" stroke-width="2" fill="none"/></svg>
<svg class="b" style="left:317px;top:42.5px;" width="16" height="16" viewBox="0 0 16 16"><path d="M2 2 L2 14 L14 14 L12 6 L10 2Z" fill="#cfe4f4" stroke="#3a6a90" stroke-width="1.6"/><path d="M4 9 L11 9" stroke="#3a6a90" stroke-width="1.4"/></svg>
<svg class="b" style="left:340px;top:42.5px;" width="16" height="16" viewBox="0 0 16 16"><path d="M1 13 L9 3 Q13 1 14 5 L10 9" stroke="#222" stroke-width="2" fill="none"/></svg>
<svg class="b" style="left:361px;top:42.5px;" width="16" height="16" viewBox="0 0 16 16"><ellipse cx="5" cy="10" rx="5" ry="4" fill="#3a9ae0"/><path d="M8 2 L11 6 L15 3 M10 7 L14 12 L10 13" stroke="#4a3a30" stroke-width="2" fill="none"/></svg>
<svg class="b" style="left:382px;top:42.5px;" width="16" height="16" viewBox="0 0 16 16"><rect x="2" y="2" width="11" height="2" fill="#555"/><rect x="2" y="5" width="11" height="4" fill="#e8a030"/><rect x="2" y="10" width="11" height="4" fill="#c06820"/><rect x="2" y="14" width="11" height="1.5" fill="#444"/></svg>
<svg class="b" style="left:404px;top:42.5px;" width="16" height="16" viewBox="0 0 16 16"><path d="M1 14 L2 6 Q3 2 8 2 Q13 2 14 6 L15 14Z" fill="#d04818"/><path d="M3 5 Q5 3 8 3 L7 12 L3 12Z" fill="#f09070"/></svg>
<svg class="b" style="left:428px;top:42.5px;" width="16" height="16" viewBox="0 0 16 16"><path d="M2 10 Q1 3 7 2 Q12 3 12 8 L15 13 L12 14 Q6 15 2 10Z" fill="#4a8a30"/><circle cx="6" cy="7" r="2.5" fill="#8ac850"/></svg>
<svg class="b" style="left:450px;top:42.5px;" width="16" height="16" viewBox="0 0 16 16"><path d="M8 1 L8 15 M1 7 L15 7 M3 3 L5 5 M13 3 L11 5 M2 14 L7 9 M14 14 L9 9" stroke="#111" stroke-width="2.2" fill="none"/></svg>
<svg class="b" style="left:474px;top:42.5px;" width="16" height="16" viewBox="0 0 16 16"><path d="M2 14 Q1 5 6 3 L10 1 Q15 5 14 14Z" fill="#e8a840"/><path d="M4 13 L5 6 M9 13 L10 5" stroke="#8a5010" stroke-width="1.5"/><path d="M7 2 L12 2" stroke="#6a8aa0" stroke-width="1.5"/></svg>
<svg class="b" style="left:496px;top:42.5px;" width="16" height="16" viewBox="0 0 16 16"><path d="M1 5 L6 2 L14 4 L15 10 L8 14 L2 12Z" fill="#b8d8b0" stroke="#5a9a50" stroke-width="1.5"/><circle cx="7" cy="8" r="3" fill="#90b8e0"/></svg>
<svg class="b" style="left:516px;top:42.5px;" width="16" height="16" viewBox="0 0 16 16"><path d="M2 13 Q1 8 5 6 Q7 2 11 3 Q15 5 14 9 L15 13Z" fill="#3a3a3a"/><path d="M4 9 L12 9" stroke="#ccc" stroke-width="1.2"/></svg>
<svg class="b" style="left:537px;top:42.5px;" width="16" height="16" viewBox="0 0 16 16"><path d="M2 14 L6 4 L10 2 L12 8 L8 14 M6 9 L12 10" stroke="#d8b030" stroke-width="2" fill="none"/><circle cx="14" cy="13" r="2" fill="#333"/></svg>
<svg class="b" style="left:559px;top:42.5px;" width="16" height="16" viewBox="0 0 16 16"><path d="M2 13 L2 5 Q2 2 8 2 Q14 2 14 8 L14 13Z" fill="#e8e8e8" stroke="#555" stroke-width="1.6"/><rect x="6" y="6" width="5" height="5" fill="#bbb"/></svg>
<svg class="b" style="left:581px;top:42.5px;" width="16" height="16" viewBox="0 0 16 16"><path d="M5 2 L10 2 L10 7 L14 7 L15 13 L1 13 L2 8 L5 8Z" fill="#d88020"/><rect x="1" y="11" width="14" height="3" fill="#6a4020"/></svg>
<svg class="b" style="left:601px;top:42.5px;" width="16" height="16" viewBox="0 0 16 16"><path d="M1 9 L6 3 L12 2 L15 6 L11 10 L4 12Z" fill="#4a9ae0"/><path d="M5 5 L10 5" stroke="#bde" stroke-width="1.5"/><circle cx="7" cy="13" r="2" fill="#a03020"/><path d="M11 10 L14 13" stroke="#333" stroke-width="1.5"/></svg>
<svg class="b" style="left:624px;top:42.5px;" width="16" height="16" viewBox="0 0 16 16"><path d="M3 4 Q8 1 13 4 L14 13 Q8 15 2 13Z" fill="#e8b040" stroke="#6a6050" stroke-width="1.4"/><rect x="4" y="4" width="8" height="4" fill="#c8c8c0"/></svg>
<svg class="b" style="left:641px;top:42.5px;" width="16" height="16" viewBox="0 0 16 16"><path d="M4 3 L8 6 L4 9 M4 8 L8 12 L4 14" stroke="#4a8ad0" stroke-width="2.4" fill="none"/></svg>
<svg class="b" style="left:656px;top:42.5px;" width="16" height="16" viewBox="0 0 16 16"><path d="M2 5 L8 3 L8 13 M6 13 L10 13" stroke="#1a3a5a" stroke-width="2.6" fill="none"/></svg>
<div class="b" style="left:142px;top:49px;width:2px;height:2px;background:#333;border-radius:50%"></div>
<div class="b" style="left:0px;top:65px;width:1152px;height:20px;background:#f0f0f0;"></div>
<div class="b" style="left:-2px;top:67px;width:10px;height:17px;border:1px solid #c8c8c8;background:#fafafa"></div>
<div class="b" style="left:-1px;top:70px;width:8px;height:10px;border:1.5px solid #555;border-radius:50%"></div>
<div class="b" style="left:9px;top:67px;width:114px;height:17px;border:1px solid #c8c8c8;background:#f7f7f7"></div>
<svg class="b" style="left:11px;top:68px;" width="15" height="15" viewBox="0 0 16 16"><rect x="2" y="2" width="12" height="12" rx="2" fill="#fafafa" stroke="#444" stroke-width="1.5"/></svg>
<div class="b" style="left:15px;top:72px;width:6px;height:7px;background:#444;clip-path:polygon(100% 0,0 50%,100% 100%)"></div>
<div class="t" style="left:29.3px;top:70.15px;font-size:11.63px;color:#3a3a3a;font-weight:normal;transform:scaleX(1.022);transform-origin:0 0;opacity:1">ЪФФЭ</div><div class="t" style="left:29.3px;top:70.15px;font-size:11.63px;color:#3a3a3a;font-weight:normal;transform:scaleX(1.139);transform-origin:0 0;opacity:0.45">ЕИНТ</div>
<svg class="b" style="left:66px;top:68px;" width="14" height="14" viewBox="0 0 16 16"><circle cx="8" cy="8" r="5" fill="#e8a020"/><circle cx="9" cy="9" r="2" fill="#a86010"/></svg>
<div class="t" style="left:94.8px;top:70.15px;font-size:11.63px;color:#3a3a3a;font-weight:normal;transform:scaleX(1.026);transform-origin:0 0;opacity:1">ЫЪ</div><div class="t" style="left:94.8px;top:70.15px;font-size:11.63px;color:#3a3a3a;font-weight:normal;transform:scaleX(1.194);transform-origin:0 0;opacity:0.45">ПН</div>
<div class="b" style="left:123px;top:67px;width:46px;height:17px;border:1px solid #c8c8c8;background:#f7f7f7"></div>
<div class="t" style="left:125.5px;top:70.15px;font-size:11.63px;color:#3a3a3a;font-weight:normal;transform:scaleX(0.935);transform-origin:0 0;opacity:1">ЪЫЭШ</div><div class="t" style="left:125.5px;top:70.15px;font-size:11.63px;color:#3a3a3a;font-weight:normal;transform:scaleX(1.146);transform-origin:0 0;opacity:0.45">ПГНИ</div>
<div class="b" style="left:169px;top:67px;width:86px;height:17px;border:1px solid #c8c8c8;background:#f7f7f7"></div>
<div class="t" style="left:176px;top:70.15px;font-size:11.63px;color:#3a3a3a;font-weight:normal;transform:scaleX(0.840);transform-origin:0 0;opacity:1">ЪЮБ</div><div class="t" style="left:176px;top:70.15px;font-size:11.63px;color:#3a3a3a;font-weight:normal;transform:scaleX(0.956);transform-origin:0 0;opacity:0.45">ПНП</div>
<div class="b" style="left:200.5px;top:74.75px;width:0;height:0;border-left:2.5px solid transparent;border-right:2.5px solid transparent;border-top:2.5px solid #333;"></div>
<div class="t" style="left:210px;top:70.27px;font-size:10.90px;color:#666;font-weight:normal;transform:scaleX(1.003);transform-origin:0 0;opacity:1">БЪЦЖ</div><div class="t" style="left:210px;top:70.27px;font-size:10.90px;color:#666;font-weight:normal;transform:scaleX(1.155);transform-origin:0 0;opacity:0.45">НИГП</div>
<div class="b" style="left:176px;top:82px;width:70px;height:1px;background:#aaa"></div>
<div class="b" style="left:26px;top:85px;width:97px;height:15.5px;background:linear-gradient(#f6f6f6,#dedede);border:1px solid #b0b0b0;border-top:none"></div>
<svg class="b" style="left:29px;top:86px;" width="14" height="14" viewBox="0 0 16 16"><circle cx="8" cy="8" r="5.5" fill="#fafafa" stroke="#333" stroke-width="1.8"/><path d="M8 8 L12 6" stroke="#333" stroke-width="1.5"/></svg>
<div class="t" style="left:46px;top:87.04px;font-size:12.35px;color:#555;font-weight:normal;transform:scaleX(0.977);transform-origin:0 0;opacity:1">ЪЫДЦФ</div><div class="t" style="left:46px;top:87.04px;font-size:12.35px;color:#555;font-weight:normal;transform:scaleX(1.061);transform-origin:0 0;opacity:0.45">ПИЕНН</div>
<div class="b" style="left:0px;top:85px;width:26px;height:748px;background:#f0f0f0;"></div>
<div class="b" style="left:23px;top:85px;width:3px;height:728px;background:linear-gradient(90deg,#f4f4ec,#f8f8e4);"></div>
<div class="b" style="left:12px;top:89px;width:7px;height:9px;border:1.5px solid #666;border-radius:0 5px 5px 0;border-left-width:2px"></div>
<svg class="b" style="left:4px;top:111px;" width="16" height="16" viewBox="0 0 16 16"><path d="M3 2 L10 2 L12 5 L5 6Z M2 8 L12 7 L13 14 L4 14Z" fill="#d8d8d8" stroke="#333" stroke-width="1.6"/></svg>
<svg class="b" style="left:4px;top:131px;" width="16" height="16" viewBox="0 0 16 16"><path d="M2 5 Q6 1 13 3 L14 8 L6 9Z" fill="#f0c020"/><path d="M2 9 L12 8 L10 14 L3 13Z" fill="#2a3a50"/></svg>
<svg class="b" style="left:4px;top:153.5px;" width="16" height="16" viewBox="0 0 16 16"><path d="M2 14 L2 3 L10 2 Q14 4 14 9 L12 13" stroke="#333" stroke-width="1.8" fill="#f4f4f4"/><circle cx="9" cy="9" r="3" fill="#aaa"/></svg>
<svg class="b" style="left:4px;top:172px;" width="16" height="16" viewBox="0 0 16 16"><path d="M2 3 L9 3 L14 9 L14 14 L2 14Z" fill="#fafafa" stroke="#333" stroke-width="1.8"/></svg>
<svg class="b" style="left:4px;top:193.5px;" width="16" height="16" viewBox="0 0 16 16"><path d="M2 12 L7 3 Q13 4 13 10 L6 14" stroke="#333" stroke-width="2" fill="#e8e8e8"/></svg>
<svg class="b" style="left:4px;top:212px;" width="16" height="16" viewBox="0 0 16 16"><path d="M2 9 Q4 4 10 5 Q15 6 13 10 Q8 14 3 12 M6 5 L4 2" stroke="#333" stroke-width="1.8" fill="#e0e0e0"/></svg>
<svg class="b" style="left:4px;top:233.5px;" width="16" height="16" viewBox="0 0 16 16"><path d="M4 14 Q2 9 8 8 L12 2 L14 8 Q12 14 6 14Z" fill="#70c040"/><path d="M2 6 L5 6" stroke="#333" stroke-width="2"/><path d="M6 14 Q10 12 12 6" stroke="#205030" stroke-width="1.5" fill="none"/></svg>
<svg class="b" style="left:4px;top:256px;" width="16" height="16" viewBox="0 0 16 16"><rect x="2" y="2" width="12" height="12" fill="#fafafa" stroke="#333" stroke-width="1.8"/><path d="M2 7 L14 7" stroke="#333" stroke-width="1.5"/></svg>
<svg class="b" style="left:4px;top:277px;" width="16" height="16" viewBox="0 0 16 16"><path d="M2 2 L14 14 M14 3 L3 14 M10 2 L13 4" stroke="#333" stroke-width="1.9" fill="none"/></svg>
<svg class="b" style="left:4px;top:300px;" width="16" height="16" viewBox="0 0 16 16"><path d="M2 8 Q8 1 14 6 L14 8Z" fill="#555"/><path d="M4 8 L4 14 M9 8 L9 13 M12 10 L14 14" stroke="#333" stroke-width="2"/></svg>
<svg class="b" style="left:4px;top:319px;" width="16" height="16" viewBox="0 0 16 16"><path d="M2 3 L13 2 L14 9 L8 11 L2 10Z" fill="#3a8ae8"/><path d="M6 11 L8 15" stroke="#345" stroke-width="2"/></svg>
<svg class="b" style="left:4px;top:339px;" width="16" height="16" viewBox="0 0 16 16"><rect x="3" y="2" width="10" height="12" rx="4" fill="#e0e0e0" stroke="#444" stroke-width="1.6"/></svg>
<svg class="b" style="left:4px;top:359px;" width="16" height="16" viewBox="0 0 16 16"><rect x="2" y="3" width="12" height="10" fill="#e8e8e8" stroke="#333" stroke-width="1.6"/><path d="M4 7 L12 7 M4 10 L12 10" stroke="#555" stroke-width="1.5"/></svg>
<svg class="b" style="left:4px;top:380px;" width="16" height="16" viewBox="0 0 16 16"><path d="M2 12 Q1 4 8 2 Q15 3 14 10 Q12 14 2 12Z" fill="#555" stroke="#333" stroke-width="1.2"/></svg>
<svg class="b" style="left:4px;top:402px;" width="16" height="16" viewBox="0 0 16 16"><path d="M2 3 L8 9 L13 2 M8 9 L7 15" stroke="#444" stroke-width="1.8" fill="none"/><path d="M9 10 Q13 10 13 14" stroke="#888" stroke-width="1.5" fill="none"/></svg>
<svg class="b" style="left:4px;top:423px;" width="16" height="16" viewBox="0 0 16 16"><path d="M3 2 L3 14 M6 5 L6 14 M9 8 Q13 6 13 12" stroke="#666" stroke-width="1.8" fill="none"/></svg>
<svg class="b" style="left:4px;top:443px;" width="16" height="16" viewBox="0 0 16 16"><path d="M4 3 Q1 8 5 13 Q11 15 13 10 Q14 5 10 4" stroke="#888" stroke-width="1.4" fill="#f0f0f0"/></svg>
<svg class="b" style="left:4px;top:464px;" width="16" height="16" viewBox="0 0 16 16"><path d="M2 4 L5 3 M3 6 Q3 14 8 14 Q14 13 13 7 Q10 2 5 5" stroke="#222" stroke-width="1.8" fill="#f0f0f0"/><circle cx="9" cy="10" r="2.5" fill="#333"/></svg>
<div class="b" style="left:-1px;top:794px;width:24px;height:20px;border:1px solid #b8b8b8;background:#f8f8f8"></div>
<svg class="b" style="left:2px;top:796px;" width="16" height="16" viewBox="0 0 16 16"><rect x="2" y="2" width="12" height="12" rx="2" fill="#fafafa" stroke="#444" stroke-width="1.5"/></svg>
<div class="b" style="left:1004px;top:85px;width:148px;height:746px;background:#f8f8f2"></div>
<div class="b" style="left:1008px;top:85px;width:144px;height:341px;background:#f0f0f0;border-left:1px solid #9a9a9a;border-top:1px solid #b8b8b8"></div>
<div class="b" style="left:1010px;top:88px;width:103px;height:20px;background:linear-gradient(#dedede,#bcbcbc);border:1px solid #9a9a9a;border-radius:2px"></div>
<svg class="b" style="left:1012px;top:90px;" width="16" height="16" viewBox="0 0 16 16"><circle cx="8" cy="8" r="7" fill="#e89838" stroke="#a05a10" stroke-width="1"/><circle cx="7" cy="8" r="3.5" fill="#f8f0e0"/></svg>
<svg class="b" style="left:1032px;top:90px;" width="16" height="16" viewBox="0 0 16 16"><rect x="0" y="7" width="4" height="2" fill="#333"/><rect x="4" y="3" width="5" height="11" fill="#3a70c0"/><rect x="10" y="7" width="6" height="7" fill="#2a5aa0"/><rect x="5" y="1" width="3" height="3" fill="#dde"/></svg>
<svg class="b" style="left:1056px;top:90px;" width="16" height="16" viewBox="0 0 16 16"><path d="M3 1 L3 15 M13 2 L5 9 L14 15" stroke="#2a4a80" stroke-width="2.4" fill="none"/><rect x="6" y="10" width="8" height="5" fill="#e8eef8"/></svg>
<svg class="b" style="left:1075px;top:90px;" width="16" height="16" viewBox="0 0 16 16"><rect x="1" y="1" width="14" height="14" fill="#1a3a70"/><path d="M3 14 L8 3 L13 14" fill="#e8e8f0"/><path d="M6 10 L10 10 L8 5Z" fill="#2a5aa8"/></svg>
<svg class="b" style="left:1095px;top:90px;" width="16" height="16" viewBox="0 0 16 16"><rect x="1" y="1" width="14" height="14" rx="2" fill="#3a8ae0" stroke="#2060a0" stroke-width="1"/><rect x="2" y="2" width="6" height="6" fill="#90c0f0"/></svg>
<div class="b" style="left:1115px;top:88px;width:40px;height:20px;background:linear-gradient(#e2e2e2,#c0c0c0);border:1px solid #9a9a9a;border-radius:2px"></div>
<svg class="b" style="left:1116px;top:90px;" width="15" height="15" viewBox="0 0 16 16"><rect x="2" y="6" width="12" height="8" fill="#f0f0f0" stroke="#333" stroke-width="1.6"/><path d="M6 6 L6 2 L12 2" stroke="#333" stroke-width="1.4" fill="none"/></svg>
<svg class="b" style="left:1139px;top:91px;" width="14" height="14" viewBox="0 0 16 16"><path d="M1 8 L15 8 M9 3 L15 8 L9 13" stroke="#222" stroke-width="2.4" fill="none"/></svg>
<div class="b" style="left:1009px;top:109px;width:143px;height:1px;background:#d0d0d0"></div>
<div class="t" style="left:1015px;top:112.20px;font-size:11.34px;color:#2a2a2a;font-weight:normal;transform:scaleX(1.137);transform-origin:0 0;opacity:1">ЭД</div><div class="t" style="left:1015px;top:112.20px;font-size:11.34px;color:#2a2a2a;font-weight:normal;transform:scaleX(1.102);transform-origin:0 0;opacity:0.45">ИН</div>
<svg class="b" style="left:1011px;top:126px;" width="13" height="13" viewBox="0 0 16 16"><path d="M2 15 Q1 5 9 1 L14 15Z" fill="#c8b080" stroke="#443" stroke-width="1.3"/></svg>
<div class="t" style="left:1028px;top:125.92px;font-size:13.08px;color:#3a3a3a;font-weight:normal;transform:scaleX(0.877);transform-origin:0 0;opacity:1">ШЦ</div><div class="t" style="left:1028px;top:125.92px;font-size:13.08px;color:#3a3a3a;font-weight:normal;transform:scaleX(1.090);transform-origin:0 0;opacity:0.45">НТ</div>
<div class="b" style="left:1133px;top:125px;width:19px;height:14px;border:1px solid #b8b8b8;background:#fafafa"></div>
<div class="b" style="left:1138px;top:129px;width:5px;height:5px;background:#a08040"></div>
<div class="b" style="left:1008px;top:141px;width:133px;height:16px;background:linear-gradient(#4a96f4,#2e7ee6);"></div>
<div class="b" style="left:1013px;top:144px;width:10px;height:10px;background:#f0f6ff;border-radius:50%"></div>
<div class="b" style="left:1015px;top:147px;width:6px;height:3px;background:#3a7ad8"></div>
<div class="t" style="left:1028px;top:143.09px;font-size:12.06px;color:#1a3a80;font-weight:normal;transform:scaleX(1.096);transform-origin:0 0;opacity:0.9">ЭЭ</div><div class="t" style="left:1028px;top:143.09px;font-size:12.06px;color:#1a3a80;font-weight:normal;transform:scaleX(1.250);transform-origin:0 0;opacity:0.405">ГП</div>
<div class="b" style="left:1127.5px;top:147.25px;width:0;height:0;border-left:3.5px solid transparent;border-right:3.5px solid transparent;border-top:3.5px solid #15306a;"></div>
<div class="b" style="left:1141px;top:141px;width:11px;height:16px;background:#cadcf0"></div>
<div class="b" style="left:1011px;top:157px;width:1px;height:79px;background:#c8c8c8"></div>
<div class="b" style="left:1011px;top:236px;width:129px;height:1px;background:#c8c8c8"></div>
<div class="b" style="left:1027px;top:157px;width:113px;height:16px;background:#fff;border:1px solid #9c9c9c"></div>
<div class="b" style="left:1128px;top:163.5px;width:0;height:0;border-left:3px solid transparent;border-right:3px solid transparent;border-top:3px solid #222;"></div>
<div class="t" style="left:1030px;top:158.79px;font-size:12.35px;color:#3a3a3a;font-weight:normal;transform:scaleX(0.942);transform-origin:0 0;opacity:1">ЭДЖ</div><div class="t" style="left:1030px;top:158.79px;font-size:12.35px;color:#3a3a3a;font-weight:normal;transform:scaleX(1.166);transform-origin:0 0;opacity:0.45">НТГ</div>
<div class="b" style="left:1027px;top:172px;width:113px;height:17px;background:#ebebeb;border:1px solid #b4b4b4"></div>
<div class="b" style="left:1064px;top:172px;width:1px;height:16px;background:#b8b8b8"></div>
<div class="t" style="left:1091.7px;top:174.65px;font-size:11.63px;color:#3a3a3a;font-weight:normal;transform:scaleX(1.074);transform-origin:0 0;opacity:1">ЫШ</div><div class="t" style="left:1091.7px;top:174.65px;font-size:11.63px;color:#3a3a3a;font-weight:normal;transform:scaleX(1.346);transform-origin:0 0;opacity:0.45">ИИ</div>
<div class="t" style="left:1030px;top:174.29px;font-size:12.35px;color:#3a3a3a;font-weight:normal;transform:scaleX(0.860);transform-origin:0 0;opacity:1">ЦШЫ</div><div class="t" style="left:1030px;top:174.29px;font-size:12.35px;color:#3a3a3a;font-weight:normal;transform:scaleX(1.124);transform-origin:0 0;opacity:0.45">ТЕЕ</div>
<div class="b" style="left:1027px;top:188px;width:113px;height:15px;background:#fff;border:1px solid #9c9c9c"></div>
<div class="b" style="left:1128px;top:194.0px;width:0;height:0;border-left:3px solid transparent;border-right:3px solid transparent;border-top:3px solid #222;"></div>
<div class="t" style="left:1030px;top:189.29px;font-size:12.35px;color:#3a3a3a;font-weight:normal;transform:scaleX(0.860);transform-origin:0 0;opacity:1">ЫЦШ</div><div class="t" style="left:1030px;top:189.29px;font-size:12.35px;color:#3a3a3a;font-weight:normal;transform:scaleX(1.067);transform-origin:0 0;opacity:0.45">ПТП</div>
<div class="b" style="left:1027px;top:188px;width:37px;height:15px;border:1.5px solid #333"></div>
<div class="b" style="left:1027px;top:203px;width:37px;height:5px;background:repeating-linear-gradient(90deg,#555 0 3px,#bbb 3px 5px);opacity:.7"></div>
<div class="b" style="left:1027px;top:208px;width:113px;height:13px;background:#ebebeb;border:1px solid #b4b4b4"></div>
<div class="b" style="left:1064px;top:208px;width:1px;height:12px;background:#b8b8b8"></div>
<div class="t" style="left:1091.7px;top:208.65px;font-size:11.63px;color:#3a3a3a;font-weight:normal;transform:scaleX(0.715);transform-origin:0 0;opacity:1">ЩЫЫ</div><div class="t" style="left:1091.7px;top:208.65px;font-size:11.63px;color:#3a3a3a;font-weight:normal;transform:scaleX(0.896);transform-origin:0 0;opacity:0.45">ПИН</div>
<div class="t" style="left:1030px;top:208.29px;font-size:12.35px;color:#3a3a3a;font-weight:normal;transform:scaleX(0.833);transform-origin:0 0;opacity:1">ЦЮ</div><div class="t" style="left:1030px;top:208.29px;font-size:12.35px;color:#3a3a3a;font-weight:normal;transform:scaleX(1.011);transform-origin:0 0;opacity:0.45">НП</div>
<div class="b" style="left:1027px;top:220px;width:113px;height:16px;background:#fff;border:1px solid #9c9c9c"></div>
<div class="b" style="left:1128px;top:226.5px;width:0;height:0;border-left:3px solid transparent;border-right:3px solid transparent;border-top:3px solid #222;"></div>
<div class="t" style="left:1030px;top:221.79px;font-size:12.35px;color:#3a3a3a;font-weight:normal;transform:scaleX(0.843);transform-origin:0 0;opacity:1">ЮДФЮ</div><div class="t" style="left:1030px;top:221.79px;font-size:12.35px;color:#3a3a3a;font-weight:normal;transform:scaleX(1.234);transform-origin:0 0;opacity:0.45">ЕГГТ</div>
<div class="b" style="left:1009px;top:412px;width:131px;height:13px;background:#f0f0f0"></div>
<div class="b" style="left:1012px;top:415px;width:6px;height:6px;background:#888;clip-path:polygon(100% 0,0 50%,100% 100%)"></div>
<div class="b" style="left:1064px;top:414px;width:36px;height:10px;background:linear-gradient(#d4d4d4,#b4b4b4);border:1px solid #aaa"></div>
<div class="b" style="left:1141px;top:412px;width:11px;height:13px;border-left:1px solid #ccc"></div>
<div class="b" style="left:1144px;top:415px;width:6px;height:6px;background:#888;clip-path:polygon(0 0,100% 50%,0 100%)"></div>
<div class="b" style="left:1008px;top:425px;width:144px;height:5px;background:#f8f8f8;border-top:1px solid #9a9a9a"></div>
<div class="b" style="left:1008px;top:430px;width:144px;height:400px;background:#f0f0f0;border-left:1px solid #9a9a9a;border-bottom:1px solid #9a9a9a;border-top:1px solid #c8c8c8"></div>
<div class="b" style="left:1010px;top:433px;width:95px;height:20px;background:linear-gradient(#dedede,#bcbcbc);border:1px solid #9a9a9a;border-radius:2px"></div>
<svg class="b" style="left:1013px;top:435px;" width="15" height="15" viewBox="0 0 16 16"><rect x="1" y="1" width="14" height="14" fill="#204040"/><rect x="3" y="2" width="6" height="12" fill="#d8d8c0"/><rect x="9" y="4" width="6" height="10" fill="#e89830"/></svg>
<svg class="b" style="left:1032px;top:435px;" width="15" height="15" viewBox="0 0 16 16"><circle cx="8" cy="8" r="6.5" fill="#3a70c8"/><circle cx="8" cy="8" r="3.5" fill="#e0e8f0"/><path d="M8 1 L8 15" stroke="#203060" stroke-width="1.5"/></svg>
<svg class="b" style="left:1051px;top:435px;" width="15" height="15" viewBox="0 0 16 16"><rect x="1" y="1" width="14" height="14" fill="#2a5a40"/><rect x="3" y="3" width="10" height="10" fill="#70b070"/><rect x="7" y="2" width="6" height="5" fill="#3a80c0"/></svg>
<svg class="b" style="left:1070px;top:435px;" width="15" height="15" viewBox="0 0 16 16"><path d="M1 12 Q2 2 10 2 Q15 5 15 14 L1 14Z" fill="#2a80d0"/><circle cx="6" cy="8" r="2" fill="#a0d0f0"/></svg>
<svg class="b" style="left:1089px;top:435px;" width="15" height="15" viewBox="0 0 16 16"><path d="M2 14 L6 3 L11 8 L14 2 M3 7 L14 14" stroke="#111" stroke-width="2.6" fill="none"/><path d="M8 10 L13 12" stroke="#222" stroke-width="3"/></svg>
<div class="b" style="left:1108px;top:433px;width:46px;height:20px;background:linear-gradient(#e6e6e6,#c6c6c6);border:1px solid #9a9a9a;border-radius:2px"></div>
<svg class="b" style="left:1139px;top:436px;" width="14" height="14" viewBox="0 0 16 16"><path d="M1 8 L15 8 M9 3 L15 8 L9 13" stroke="#222" stroke-width="2.4" fill="none"/></svg>
<svg class="b" style="left:1012px;top:456px;" width="14" height="14" viewBox="0 0 16 16"><path d="M3 9 Q3 3 9 3 Q13 4 13 8 M13 8 L10 7 M13 8 L14 5 M12 10 Q11 14 6 13" stroke="#333" stroke-width="1.8" fill="none"/></svg>
<div class="t" style="left:1027px;top:458.15px;font-size:11.63px;color:#333;font-weight:normal;transform:scaleX(0.921);transform-origin:0 0;opacity:1">ЩЫЪ</div><div class="t" style="left:1027px;top:458.15px;font-size:11.63px;color:#333;font-weight:normal;transform:scaleX(1.314);transform-origin:0 0;opacity:0.45">ТТТ</div>
<div class="b" style="left:1141px;top:455px;width:11px;height:16px;border:1px solid #c0c0c0;background:#f6f6f6"></div>
<div class="b" style="left:1012px;top:473px;width:128px;height:16px;background:#fff;border:1px solid #9c9c9c"></div>
<svg class="b" style="left:1013px;top:474px;" width="14" height="14" viewBox="0 0 16 16"><rect x="1" y="1" width="14" height="14" fill="#f8f8f8" stroke="#666" stroke-width="1"/><circle cx="7.5" cy="8" r="5.5" fill="#40c030"/><path d="M4 12 Q8 13 12 8" stroke="#207020" stroke-width="1.5" fill="none"/></svg>
<div class="b" style="left:1123px;top:474px;width:1px;height:14px;background:#ccc"></div>
<div class="t" style="left:1030px;top:475.27px;font-size:10.90px;color:#333;font-weight:normal;transform:scaleX(0.554);transform-origin:0 0;opacity:1">ЩЫ</div><div class="t" style="left:1030px;top:475.27px;font-size:10.90px;color:#333;font-weight:normal;transform:scaleX(0.799);transform-origin:0 0;opacity:0.45">НГ</div>
<div class="b" style="left:1128px;top:479.5px;width:0;height:0;border-left:3px solid transparent;border-right:3px solid transparent;border-top:3px solid #222;"></div>
<div class="b" style="left:1028px;top:490px;width:1px;height:14px;background:#777"></div>
<div class="t" style="left:1029px;top:490.54px;font-size:12.35px;color:#333;font-weight:normal;transform:scaleX(0.880);transform-origin:0 0;opacity:1">ЦШ</div><div class="t" style="left:1029px;top:490.54px;font-size:12.35px;color:#333;font-weight:normal;transform:scaleX(1.051);transform-origin:0 0;opacity:0.45">ИЕ</div>
<div class="b" style="left:1010px;top:504px;width:130px;height:16px;background:linear-gradient(#a4ccf6,#8ab8ee);border:1px solid #6c9ad8"></div>
<div class="b" style="left:1028px;top:506px;width:1px;height:12px;background:#333"></div>
<div class="t" style="left:1029px;top:506.15px;font-size:11.63px;color:#2a3a6a;font-weight:normal;transform:scaleX(1.018);transform-origin:0 0;opacity:1">ББЪЩ</div><div class="t" style="left:1029px;top:506.15px;font-size:11.63px;color:#2a3a6a;font-weight:normal;transform:scaleX(1.095);transform-origin:0 0;opacity:0.45">ИПЕН</div>
<div class="b" style="left:1127.5px;top:510.25px;width:0;height:0;border-left:3.5px solid transparent;border-right:3.5px solid transparent;border-top:3.5px solid #1a3a80;"></div>
<div class="t" style="left:1029px;top:523.11px;font-size:11.92px;color:#333;font-weight:normal;transform:scaleX(0.862);transform-origin:0 0;opacity:1">ФШЮЭ</div><div class="t" style="left:1029px;top:523.11px;font-size:11.92px;color:#333;font-weight:normal;transform:scaleX(1.124);transform-origin:0 0;opacity:0.45">ЕЕТЕ</div>
<div class="b" style="left:1143px;top:471px;width:9px;height:33px;background:#e6e6e6"></div>
<div class="b" style="left:1143px;top:504px;width:9px;height:252px;background:linear-gradient(90deg,#c8c8c8,#b0b0b0)"></div>
<div class="b" style="left:1143px;top:756px;width:9px;height:57px;background:#ececec"></div>
<div class="b" style="left:1009px;top:813px;width:142px;height:16px;background:#ebebeb;border-top:1px solid #d4d4d4"></div>
<div class="b" style="left:1011px;top:814px;width:14px;height:14px;border:1px solid #c4c4c4"></div>
<div class="b" style="left:1014px;top:818px;width:6px;height:6px;background:#666;clip-path:polygon(100% 0,0 50%,100% 100%)"></div>
<div class="b" style="left:1121px;top:814px;width:19px;height:14px;border:1px solid #b4b4b4;background:#f4f4f4"></div>
<div class="t" style="left:1125px;top:815.15px;font-size:11.63px;color:#333;font-weight:normal;transform:scaleX(1.310);transform-origin:0 0;opacity:1">N</div>
<div class="b" style="left:1141px;top:814px;width:11px;height:14px;border:1px solid #c4c4c4"></div>
<div class="b" style="left:1144px;top:818px;width:6px;height:6px;background:#777;clip-path:polygon(100% 0,0 50%,100% 100%)"></div>
<div class="b" style="left:0px;top:816px;width:1008px;height:17px;background:#f4f4f4"></div>
<div class="b" style="left:-1px;top:815px;width:78px;height:18px;border:1px solid #b4b4b4;background:#fafafa"></div>
<div class="b" style="left:1px;top:818px;width:2px;height:12px;background:#555"></div>
<svg class="b" style="left:7px;top:817px;" width="12" height="12" viewBox="0 0 16 16"><path d="M2 8 Q5 2 12 3 L14 8 Q12 14 6 13Z" fill="#f8f8f8" stroke="#333" stroke-width="1.6"/><path d="M5 8 L10 8" stroke="#333" stroke-width="1.5"/></svg>
<div class="t" style="left:26px;top:818.22px;font-size:11.19px;color:#333;font-weight:normal;transform:scaleX(0.987);transform-origin:0 0;opacity:1">ЦШ</div><div class="t" style="left:26px;top:818.22px;font-size:11.19px;color:#333;font-weight:normal;transform:scaleX(1.294);transform-origin:0 0;opacity:0.45">НГ</div>
<div class="b" style="left:79px;top:815px;width:80px;height:18px;border:1px solid #b4b4b4;background:#fafafa"></div>
<svg class="b" style="left:85px;top:817px;" width="12" height="12" viewBox="0 0 16 16"><path d="M2 8 Q5 2 12 3 L14 8 Q12 14 6 13Z" fill="#f8f8f8" stroke="#333" stroke-width="1.6"/><path d="M5 8 L10 8" stroke="#333" stroke-width="1.5"/></svg>
<div class="t" style="left:100.7px;top:818.22px;font-size:11.19px;color:#333;font-weight:normal;transform:scaleX(1.002);transform-origin:0 0;opacity:1">ЖЦШБ</div><div class="t" style="left:100.7px;top:818.22px;font-size:11.19px;color:#333;font-weight:normal;transform:scaleX(1.312);transform-origin:0 0;opacity:0.45">ЕГНГ</div>
<div class="b" style="left:0px;top:833px;width:1152px;height:18px;background:linear-gradient(#f6f6f6,#ececec);border-top:1px solid #d4d4d4"></div>
<div class="b" style="left:1px;top:837px;width:32px;height:11px;background:repeating-linear-gradient(90deg,#4a88d8 0 2px,#b8d4f4 2px 4px);opacity:.85;border:1px solid #4a80c8"></div>
<div class="b" style="left:33px;top:838px;width:9px;height:9px;background:#3a80d0;border-radius:50%"></div>
<div class="b" style="left:43px;top:838px;width:8px;height:9px;background:#6a9ad0;border-radius:40%"></div>
<svg class="b" style="left:41px;top:837px;opacity:.6" width="12" height="12" viewBox="0 0 16 16"><path d="M3 9 Q3 3 9 3 Q13 4 13 8 M13 8 L10 7 M13 8 L14 5 M12 10 Q11 14 6 13" stroke="#333" stroke-width="1.8" fill="none"/></svg>
<div class="b" style="left:55px;top:837px;width:12px;height:11px;border:2px solid #3a70c0;border-radius:5px 5px 0 0;border-bottom:none"></div>
<div class="t" style="left:75.6px;top:836.82px;font-size:11.19px;color:#333;font-weight:normal;transform:scaleX(0.959);transform-origin:0 0;opacity:1">ФЫДЩ</div><div class="t" style="left:75.6px;top:836.82px;font-size:11.19px;color:#333;font-weight:normal;transform:scaleX(1.267);transform-origin:0 0;opacity:0.45">ГЕГИ</div>
<div class="t" style="left:117.4px;top:836.82px;font-size:11.19px;color:#222;font-weight:normal;transform:scaleX(0.977);transform-origin:0 0;opacity:1">ЦЭШЮ</div><div class="t" style="left:117.4px;top:836.82px;font-size:11.19px;color:#222;font-weight:normal;transform:scaleX(1.339);transform-origin:0 0;opacity:0.45">ГЕИГ</div>
<div class="t" style="left:160px;top:836.82px;font-size:11.19px;color:#2a2a2a;font-weight:normal;transform:scaleX(1.071);transform-origin:0 0;opacity:1">ЪЭЮФЪЭЪЪЭ</div><div class="t" style="left:160px;top:836.82px;font-size:11.19px;color:#2a2a2a;font-weight:normal;transform:scaleX(1.298);transform-origin:0 0;opacity:0.45">ТИПНГГПЕТ</div>
<div class="t" style="left:757px;top:836.54px;font-size:12.35px;color:#2a2a2a;font-weight:bold;transform:scaleX(1.108);transform-origin:0 0;opacity:1">Ц</div><div class="t" style="left:757px;top:836.54px;font-size:12.35px;color:#2a2a2a;font-weight:normal;transform:scaleX(1.325);transform-origin:0 0;opacity:0.45">Т</div>
<div class="t" style="left:774px;top:836.54px;font-size:12.35px;color:#2a2a2a;font-weight:normal;transform:scaleX(1.233);transform-origin:0 0;opacity:1">Б</div><div class="t" style="left:774px;top:836.54px;font-size:12.35px;color:#2a2a2a;font-weight:normal;transform:scaleX(1.121);transform-origin:0 0;opacity:0.45">Н</div>
<div class="t" style="left:790px;top:836.54px;font-size:12.35px;color:#2a2a2a;font-weight:bold;transform:scaleX(1.126);transform-origin:0 0;opacity:1">Б</div><div class="t" style="left:790px;top:836.54px;font-size:12.35px;color:#2a2a2a;font-weight:normal;transform:scaleX(1.495);transform-origin:0 0;opacity:0.45">Г</div>
<div class="t" style="left:806px;top:836.54px;font-size:12.35px;color:#2a2a2a;font-weight:normal;transform:scaleX(0.877);transform-origin:0 0;opacity:1">Ж</div><div class="t" style="left:806px;top:836.54px;font-size:12.35px;color:#2a2a2a;font-weight:normal;transform:scaleX(1.121);transform-origin:0 0;opacity:0.45">Н</div>
<div class="t" style="left:822px;top:836.54px;font-size:12.35px;color:#2a2a2a;font-weight:bold;transform:scaleX(1.136);transform-origin:0 0;opacity:1">Д</div><div class="t" style="left:822px;top:836.54px;font-size:12.35px;color:#2a2a2a;font-weight:normal;transform:scaleX(1.325);transform-origin:0 0;opacity:0.45">Т</div>
<div class="t" style="left:838px;top:836.54px;font-size:12.35px;color:#2a2a2a;font-weight:normal;transform:scaleX(0.914);transform-origin:0 0;opacity:1">Ы</div><div class="t" style="left:838px;top:836.54px;font-size:12.35px;color:#2a2a2a;font-weight:normal;transform:scaleX(1.126);transform-origin:0 0;opacity:0.45">И</div>
<div class="t" style="left:853px;top:836.54px;font-size:12.35px;color:#2a2a2a;font-weight:bold;transform:scaleX(1.108);transform-origin:0 0;opacity:1">Ц</div><div class="t" style="left:853px;top:836.54px;font-size:12.35px;color:#2a2a2a;font-weight:normal;transform:scaleX(1.214);transform-origin:0 0;opacity:0.45">Е</div>
<div class="t" style="left:868px;top:836.54px;font-size:12.35px;color:#2a2a2a;font-weight:normal;transform:scaleX(0.914);transform-origin:0 0;opacity:1">Ы</div><div class="t" style="left:868px;top:836.54px;font-size:12.35px;color:#2a2a2a;font-weight:normal;transform:scaleX(1.325);transform-origin:0 0;opacity:0.45">Т</div>
<div class="b" style="left:883px;top:837px;width:10px;height:12px;border:1.5px solid #444;border-radius:1px"></div>
<div class="b" style="left:886px;top:840px;width:4px;height:1px;background:#444"></div>
<div class="b" style="left:886px;top:843px;width:4px;height:1px;background:#444"></div>
<svg class="b" style="left:893px;top:835px;" width="14" height="14" viewBox="0 0 16 16"><ellipse cx="6" cy="8" rx="5" ry="5" fill="#f0b020"/><path d="M3 6 L9 6" stroke="#603010" stroke-width="2"/><path d="M11 6 L15 6 M11 10 L15 10" stroke="#444" stroke-width="1.3"/></svg>
<div class="b" style="left:933px;top:836px;width:1px;height:13px;background:#999"></div>
<div class="b" style="left:943px;top:836px;width:162px;height:14px;background:#fff;border:1px solid #8a8a8a"></div>
<div class="b" style="left:946px;top:838px;width:12px;height:10px;border:1.5px solid #333;border-top-width:3px"></div>
<div class="b" style="left:1094px;top:837px;width:11px;height:12px;background:#e8e8e8;border:1px solid #888"></div>
<div class="b" style="left:1097px;top:840px;width:5px;height:1px;background:#666"></div>
<div class="b" style="left:1097px;top:843px;width:5px;height:1px;background:#666"></div>
<div class="b" style="left:1111px;top:836px;width:1px;height:13px;background:#888"></div>
<div class="t" style="left:1114px;top:836.75px;font-size:11.63px;color:#444;font-weight:normal;transform:scaleX(0.953);transform-origin:0 0;opacity:1">N</div>
<div class="t" style="left:1123px;top:836.75px;font-size:11.63px;color:#333;font-weight:normal;transform:scaleX(1.038);transform-origin:0 0;opacity:1">ЦШ</div><div class="t" style="left:1123px;top:836.75px;font-size:11.63px;color:#333;font-weight:normal;transform:scaleX(1.238);transform-origin:0 0;opacity:0.45">НЕ</div>
<div class="t" style="left:1146px;top:836.75px;font-size:11.63px;color:#333;font-weight:normal;transform:scaleX(0.751);transform-origin:0 0;opacity:1">Ш</div><div class="t" style="left:1146px;top:836.75px;font-size:11.63px;color:#333;font-weight:normal;transform:scaleX(1.031);transform-origin:0 0;opacity:0.45">Е</div>
<div class="b" style="left:0px;top:851px;width:1152px;height:13px;background:linear-gradient(#22303c,#16202a);"></div>
<div class="b" style="left:157px;top:851px;width:40px;height:13px;background:linear-gradient(#4a525c,#3a424c)"></div>
<div class="b" style="left:197px;top:851px;width:82px;height:13px;background:linear-gradient(#b0bac4,#8494a2)"></div>
<div class="b" style="left:5px;top:856px;width:10px;height:8px;background:radial-gradient(#f8f8f8,#b8b8b8);border-radius:6px 6px 0 0;opacity:.75"></div>
<div class="b" style="left:46px;top:856px;width:12px;height:8px;background:radial-gradient(#5a90d0 30%,#e07838 60%);border-radius:6px 6px 0 0;opacity:.75"></div>
<div class="b" style="left:87px;top:856px;width:11px;height:8px;background:linear-gradient(90deg,#30b0d8,#60e0c8);border-radius:6px 6px 0 0;opacity:.75"></div>
<div class="b" style="left:128px;top:856px;width:15px;height:8px;background:conic-gradient(#e04030 0 33%,#f0c020 0 66%,#40a040 0);border-radius:6px 6px 0 0;opacity:.75"></div>
<div class="b" style="left:167px;top:856px;width:16px;height:8px;background:linear-gradient(#f09030,#c86010);border-radius:6px 6px 0 0;opacity:.75"></div>
<div class="b" style="left:206px;top:856px;width:17px;height:8px;background:radial-gradient(#d0e8f8 30%,#3a80c8 60%);border-radius:6px 6px 0 0;opacity:.75"></div>
<div class="b" style="left:251px;top:856px;width:15px;height:8px;background:radial-gradient(#f0d0d0 30%,#d03030 60%);border-radius:6px 6px 0 0;opacity:.75"></div>
<div class="b" style="left:870.0px;top:856px;width:12px;height:8px;background:#a8b4be;opacity:.75;border-radius:2px"></div>
<div class="b" style="left:907.5px;top:856px;width:7px;height:8px;background:#a8b4be;opacity:.75;border-radius:2px"></div>
<div class="b" style="left:924.0px;top:856px;width:8px;height:8px;background:#a8b4be;opacity:.75;border-radius:2px"></div>
<div class="b" style="left:944.0px;top:856px;width:8px;height:8px;background:#a8b4be;opacity:.75;border-radius:2px"></div>
<div class="b" style="left:964.0px;top:856px;width:8px;height:8px;background:#a8b4be;opacity:.75;border-radius:2px"></div>
<div class="b" style="left:987.0px;top:856px;width:8px;height:8px;background:#a8b4be;opacity:.75;border-radius:2px"></div>
<div class="b" style="left:1013.0px;top:856px;width:6px;height:8px;background:#a8b4be;opacity:.75;border-radius:2px"></div>
<div class="b" style="left:1029.0px;top:856px;width:10px;height:8px;background:#a8b4be;opacity:.75;border-radius:2px"></div>
<div class="b" style="left:1049.5px;top:856px;width:9px;height:8px;background:#a8b4be;opacity:.75;border-radius:2px"></div>
<div class="b" style="left:1088px;top:853px;width:12px;height:11px;background:repeating-linear-gradient(#c8d0d8 0 2px,#2a3440 2px 3.5px);opacity:.75"></div>
<div class="b" style="left:1121px;top:853px;width:1px;height:11px;background:#6a7680"></div>
<div class="b" style="left:1135px;top:854px;width:12px;height:10px;border:2px solid #c8d0d8;border-bottom:none;opacity:.75"></div>
</body></html>
